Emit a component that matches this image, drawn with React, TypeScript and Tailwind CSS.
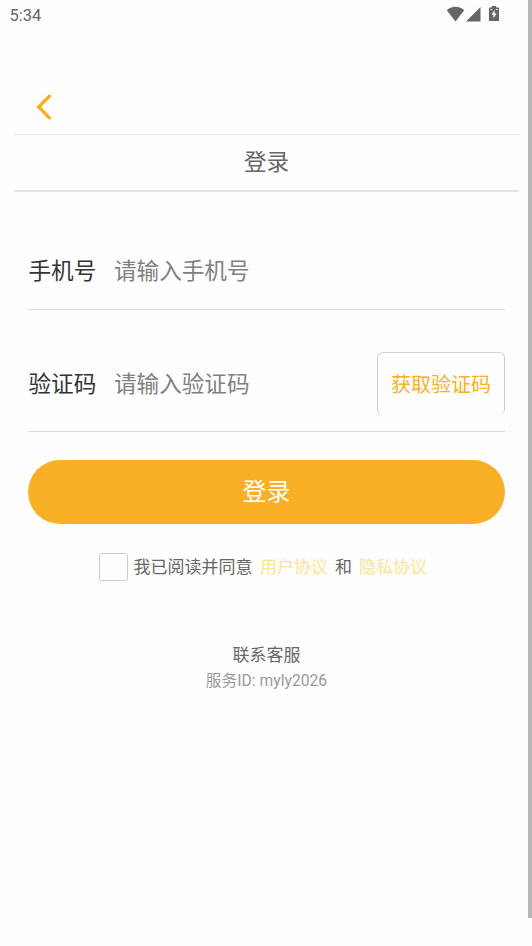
import { useState } from 'react';

function StatusBar() {
  return (
    <div className="flex h-[30px] items-center justify-between pl-[9.5px] pr-[33px] text-[#666666]">
      <span className="pt-[2px] font-['Roboto',sans-serif] text-[16.5px] leading-[30px]">5:34</span>
      <div className="flex h-[30px] items-start pt-[6px]">
        <svg className="h-[16px] w-[19px]" viewBox="0 0 19 16" fill="currentColor">
          <path d="M9.5 15.5 L0.8 4.3 C3 2.1 6 0.8 9.5 0.8 S16 2.1 18.2 4.3 Z" />
        </svg>
        <svg className="ml-[1px] h-[16px] w-[15px]" viewBox="0 0 15 16" fill="currentColor">
          <path d="M0 15.5 L14.5 1 V15.5 Z" />
        </svg>
        <svg className="ml-[8px] h-[16px] w-[10px]" viewBox="0 0 10 16" fill="currentColor">
          <path
            fillRule="evenodd"
            d="M2.8 0 H7.2 V1.4 H9.4 Q10 1.4 10 2 V14.4 Q10 15 9.4 15 H0.6 Q0 15 0 14.4 V2 Q0 1.4 0.6 1.4 H2.8 Z M1.4 2.9 V3.9 H3.2 V2.9 Z M6.8 2.9 V3.9 H8.6 V2.9 Z M5.5 3.9 L2.5 8.8 H4.4 V12.4 L7.5 7.4 H5.5 Z"
          />
        </svg>
      </div>
    </div>
  );
}

export default function App() {
  const [phone, setPhone] = useState('');
  const [code, setCode] = useState('');
  const [agreed, setAgreed] = useState(false);

  return (
    <div className="relative h-[946px] w-[532px] overflow-hidden bg-[#fefefe] font-['Noto_Sans_CJK_SC',sans-serif]">
      <StatusBar />

      {/* Header */}
      <header className="ml-[14px] w-[505px]">
        <div className="flex h-[104px] items-end pb-[14px] pl-[22px]">
          <button aria-label="返回">
            <svg className="h-[26px] w-[16px]" viewBox="0 0 16 26" fill="none" stroke="#f9b016" strokeWidth="3.2">
              <path d="M13.4 2.2 L2.7 13 L13.4 23.8" strokeLinecap="round" strokeLinejoin="miter" />
            </svg>
          </button>
        </div>
        <h1 className="flex h-[58px] items-center justify-center border-t border-b-2 border-t-[#e4e4e4] border-b-[#e6e6e6] pb-[2px] text-[22.6px] leading-none text-[#666666]">
          登录
        </h1>
      </header>

      {/* Login form */}
      <main className="ml-[28px] w-[477px]">
        <label className="mt-[39px] flex h-[79px] items-center border-b border-[#dcdcdc] pb-px text-[22.6px] leading-[34px]">
          <span className="w-[86px] pl-[0.5px] text-[#333333]">手机号</span>
          <input
            className="min-w-0 flex-1 outline-none placeholder:text-[#808080]"
            placeholder="请输入手机号"
            value={phone}
            onChange={(e) => setPhone(e.target.value)}
          />
        </label>

        <div className="mt-[42px] flex h-[80px] items-start border-b border-[#dcdcdc] text-[22.6px] leading-[34px]">
          <label className="flex h-[64px] min-w-0 flex-1 items-center pb-[2px]">
            <span className="w-[86px] pl-[0.5px] text-[#333333]">验证码</span>
            <input
              className="min-w-0 flex-1 outline-none placeholder:text-[#808080]"
              placeholder="请输入验证码"
              value={code}
              onChange={(e) => setCode(e.target.value)}
            />
          </label>
          <button className="h-[63px] w-[128px] rounded-[6px] border border-b-0 border-[#cccccc] border-t-[#d4d4d4] pb-px text-[20px] leading-none text-[#f8b025]">
            获取验证码
          </button>
        </div>

        <button className="mt-[28px] flex h-[64px] w-full items-center justify-center rounded-full bg-[#f9b026] pb-[5px] text-[24px] leading-none text-white">
          登录
        </button>

        {/* Agreement */}
        <div className="mt-[29px] flex h-[28px] items-center pl-[71px] text-[17px] leading-[26px] text-[#666666]">
          <button
            role="checkbox"
            aria-checked={agreed}
            aria-label="同意协议"
            className="mr-[5.5px] h-[28px] w-[29px] rounded-[3px] border border-[#cccccc]"
            onClick={() => setAgreed(!agreed)}
          />
          <p className="flex pb-[3px]">
            <span>我已阅读并同意</span>
            <a className="ml-[7.5px] text-[#fbe493]">用户协议</a>
            <span className="ml-[7px]">和</span>
            <a className="ml-[7px] text-[#fbe493]">隐私协议</a>
          </p>
        </div>

        {/* Customer service */}
        <div className="mt-[60px] text-center">
          <p className="text-[17px] leading-[26px] text-[#666666]">联系客服</p>
          <p className="pt-px font-['Roboto','Noto_Sans_CJK_SC',sans-serif] text-[15.7px] leading-[26px] text-[#999999]">
            服务ID: myly2026
          </p>
        </div>
      </main>

      {/* Scrollbar thumb over the page edge */}
      <div className="absolute top-0 right-0 h-[918px] w-[4px] bg-[#b7b7b7]" />
    </div>
  );
}
